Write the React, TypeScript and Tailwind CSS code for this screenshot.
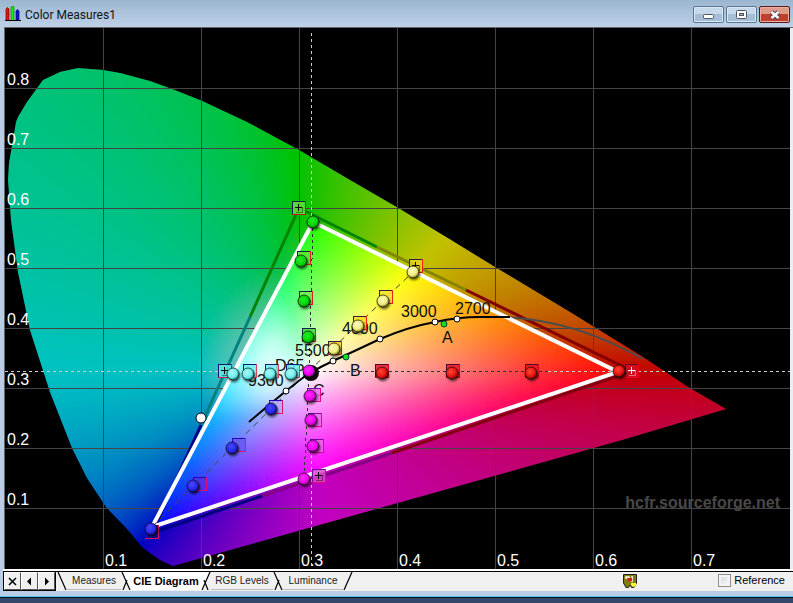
import { useState } from "react";

type Point = [number, number];

const WHITE: Point = [311, 371];

// primaries and secondaries of the reference gamut
const RING: { at: Point; rgb: number[] }[] = [
  { at: [632, 371], rgb: [255, 0, 0] },
  { at: [416, 266], rgb: [255, 255, 0] },
  { at: [299, 208], rgb: [0, 255, 0] },
  { at: [226, 371], rgb: [0, 255, 255] },
  { at: [152, 533], rgb: [0, 0, 255] },
  { at: [319, 476], rgb: [255, 0, 255] },
];

const LOCUS =
  "173,566 160,560 143,548 128,530 106,507 87,478 72,448 50,392 30,330 18,272 11,220 8,180 9,163 13,140 16,122 18,117 27,102 43,80 60,72 78,68 103,70 120,73 150,81 172,89 200,100 247,122 299,150 350,180 400,209 451,240 495,267 570,312 643,357 688,387 726,409 622,440";
const MEASURED = "313,222 618,372 152,527";

function colorAt(x: number, y: number) {
  const dx = x - WHITE[0];
  const dy = y - WHITE[1];
  const dist = Math.hypot(dx, dy) || 1;
  for (let i = 0; i < RING.length; i++) {
    const a = RING[i];
    const b = RING[(i + 1) % RING.length];
    const ax = a.at[0] - WHITE[0];
    const ay = a.at[1] - WHITE[1];
    const bx = b.at[0] - WHITE[0];
    const by = b.at[1] - WHITE[1];
    const det = ax * by - bx * ay;
    const u = (dx * by - bx * dy) / det;
    const v = (ax * dy - dx * ay) / det;
    if (u < -0.0001 || v < -0.0001) continue;
    const s = u + v;
    const t = s ? v / s : 0;
    let pale = Math.pow(Math.max(0, 1 - s), 1.25);
    const facing = Math.max(0, -dx / dist);
    const glow = Math.min(1, Math.max(0, (112 - dist) / 65)) * Math.sqrt(facing);
    pale = Math.max(pale, glow * 0.85);
    const rgb = a.rgb.map((c, k) => {
      const d = b.rgb[k];
      const pure = c === d ? c : 255 * (c > d ? 1 - t : t);
      return Math.round(pure + (255 - pure) * pale);
    });
    return `rgb(${rgb.join(",")})`;
  }
  return "#fff";
}

const STEP = 5;
const CELLS: { x: number; y: number; fill: string }[] = [];
for (let y = 60; y < 575; y += STEP) {
  for (let x = 0; x < 735; x += STEP) {
    if (y < x * 0.585 - 40 || y > 640 - x * 0.28) continue;
    CELLS.push({ x, y, fill: colorAt(x + STEP / 2, y + STEP / 2) });
  }
}

const GAMUT_EDGES = [
  { d: "M299 208L250 317", color: "#008400" },
  { d: "M250 317L201 425", color: "#008080" },
  { d: "M201 425L152 533", color: "#000084" },
  { d: "M299 208L377 247", color: "#008400" },
  { d: "M377 247L466 290", color: "#848400" },
  { d: "M466 290L632 371", color: "#840000" },
  { d: "M632 371L392 453", color: "#840010" },
  { d: "M392 453L262 496", color: "#840084" },
  { d: "M262 496L152 533", color: "#000084" },
];

const TARGETS: { x: number; y: number; fill: string; rim: string; edge: string; cross?: string }[] = [
  { x: 299, y: 208, fill: "#62e038", rim: "#102048", edge: "#c01818", cross: "#000" },
  { x: 304, y: 258, fill: "#58e838", rim: "#102048", edge: "#e02020" },
  { x: 306, y: 298, fill: "#70f050", rim: "#102048", edge: "#e02020" },
  { x: 309, y: 335, fill: "#40d838", rim: "#102048", edge: "#e02020" },
  { x: 416, y: 266, fill: "#e8d020", rim: "#302040", edge: "#f02010", cross: "#000" },
  { x: 386, y: 297, fill: "#f8e030", rim: "#302040", edge: "#f02010" },
  { x: 360, y: 323, fill: "#f8d820", rim: "#302040", edge: "#f02010" },
  { x: 335, y: 348, fill: "#f8c820", rim: "#302040", edge: "#f02010" },
  { x: 225, y: 371, fill: "#60e8e8", rim: "#101878", edge: "#c02050", cross: "#000" },
  { x: 250, y: 371, fill: "#70f0f0", rim: "#101878", edge: "#e04060" },
  { x: 272, y: 371, fill: "#70f0f0", rim: "#101878", edge: "#e04060" },
  { x: 293, y: 371, fill: "#70f0f0", rim: "#101878", edge: "#e04060" },
  { x: 382, y: 371, fill: "#e81830", rim: "#500828", edge: "#e00020" },
  { x: 453, y: 371, fill: "#f01828", rim: "#500828", edge: "#e00020" },
  { x: 532, y: 371, fill: "#f01020", rim: "#500828", edge: "#e00020" },
  { x: 632, y: 371, fill: "#d01020", rim: "#680828", edge: "#f00020", cross: "#fff" },
  { x: 314, y: 395, fill: "#f070f0", rim: "#7800a8", edge: "#e8008c" },
  { x: 315, y: 420, fill: "#f070f0", rim: "#7800a8", edge: "#e8008c" },
  { x: 317, y: 446, fill: "#f060f0", rim: "#7800a8", edge: "#e8008c" },
  { x: 319, y: 476, fill: "#d848c8", rim: "#7800a8", edge: "#f00080", cross: "#000" },
  { x: 276, y: 407, fill: "#b8a8f8", rim: "#2008b8", edge: "#e0107c" },
  { x: 239, y: 445, fill: "#6858f0", rim: "#2008b8", edge: "#e0107c" },
  { x: 200, y: 484, fill: "#5030e8", rim: "#2008b8", edge: "#e0107c" },
  { x: 152, y: 532, fill: "#1010a8", rim: "#2008a0", edge: "#e0105c" },
];

const READINGS: { hue: string; points: Point[] }[] = [
  { hue: "green", points: [[313, 222], [301, 261], [304, 301], [308, 337]] },
  { hue: "yellow", points: [[413, 272], [383, 301], [358, 326], [334, 349]] },
  { hue: "cyan", points: [[233, 374], [248, 374], [270, 374], [291, 374]] },
  { hue: "red", points: [[382, 373], [452, 373], [531, 373], [619, 371]] },
  { hue: "magenta", points: [[310, 396], [311, 420], [313, 446], [304, 479], [309, 371]] },
  { hue: "blue", points: [[271, 409], [232, 448], [193, 486], [151, 529]] },
];

const BALLS = [
  { hue: "green", light: "#28e828", base: "#04d804", dark: "#008000" },
  { hue: "yellow", light: "#fcfcc8", base: "#f0ec78", dark: "#807820" },
  { hue: "cyan", light: "#a8fcf8", base: "#70ecec", dark: "#188080" },
  { hue: "red", light: "#ff4838", base: "#e81410", dark: "#800000" },
  { hue: "magenta", light: "#ff30ff", base: "#f000f0", dark: "#800080" },
  { hue: "blue", light: "#4848ff", base: "#2828f0", dark: "#101080" },
];

const CURVE_LABELS = [
  { text: "9300", x: 248, y: 386 },
  { text: "D65", x: 275, y: 371 },
  { text: "5500", x: 295, y: 356 },
  { text: "4000", x: 342, y: 334 },
  { text: "3000", x: 401, y: 317 },
  { text: "2700", x: 455, y: 314 },
  { text: "A", x: 442, y: 343 },
  { text: "B", x: 350, y: 376 },
  { text: "C", x: 313, y: 396 },
];

function CieDiagram() {
  return (
    <svg
      viewBox="5 28 785 541"
      className="block h-auto w-full bg-black font-['Liberation_Sans',sans-serif] text-[16px]"
      role="img"
      aria-label="CIE chromaticity diagram"
    >
      <defs>
        <clipPath id="locus">
          <polygon points={LOCUS} />
        </clipPath>
        <clipPath id="measured">
          <polygon points={MEASURED} />
        </clipPath>
        <filter id="soften" x="0" y="0" width="1" height="1">
          <feGaussianBlur stdDeviation="5" />
        </filter>
        <filter id="shadow" x="-0.5" y="-0.5" width="2" height="2">
          <feDropShadow dx="1" dy="2" stdDeviation="1" floodOpacity="0.6" />
        </filter>
        {BALLS.map((b) => (
          <radialGradient key={b.hue} id={b.hue} cx="0.42" cy="0.38" r="0.62">
            <stop offset="0" stopColor={b.light} />
            <stop offset="0.65" stopColor={b.base} />
            <stop offset="1" stopColor={b.dark} />
          </radialGradient>
        ))}
        <g id="spectrum" filter="url(#soften)">
          {CELLS.map((c) => (
            <rect key={`${c.x}-${c.y}`} x={c.x} y={c.y} width={STEP + 1} height={STEP + 1} fill={c.fill} />
          ))}
        </g>
      </defs>

      <g clipPath="url(#locus)">
        <use href="#spectrum" />
        <rect x="0" y="28" width="790" height="541" fill="#000" opacity="0.24" />
      </g>

      <g stroke="#444" strokeWidth="1" shapeRendering="crispEdges">
        {[103, 201, 299, 397, 495, 593, 691].map((x) => (
          <path key={x} d={`M${x + 0.5} 28V569`} />
        ))}
        {[88, 148, 208, 268, 328, 388, 448, 508].map((y) => (
          <path key={y} d={`M5 ${y + 0.5}H790`} />
        ))}
      </g>

      <g clipPath="url(#measured)">
        <use href="#spectrum" />
      </g>

      <g strokeWidth="3" fill="none">
        {GAMUT_EDGES.map((e) => (
          <path key={e.d} d={e.d} stroke={e.color} />
        ))}
      </g>
      <path d="M505 317Q575 320 643 359" fill="none" stroke="#4c4c4c" strokeWidth="2" />
      <polygon points={MEASURED} fill="none" stroke="#fff" strokeWidth="4" />

      <g strokeDasharray="3 3" fill="none" shapeRendering="crispEdges">
        <path d="M5 371.5H218M548 371.5H790M311.5 33V216M311.5 455V569" stroke="#ccc" />
        <path d="M311 371.5H548M313 222L309 371L304 479" stroke="#333" />
      </g>
      <path d="M152 527L309 371L413 272" fill="none" stroke="#444" strokeDasharray="6 5" />

      <g fill="#111">
        {CURVE_LABELS.map((l) => (
          <text key={l.text} x={l.x} y={l.y}>
            {l.text}
          </text>
        ))}
      </g>
      <path
        d="M249 422Q270 404 286 391T310 373Q322 366 333 361T380 339Q408 327 435 322Q458 317 480 317L510 317"
        fill="none"
        stroke="#000"
        strokeWidth="2"
      />
      <g fill="#fff" stroke="#000">
        {[[286, 391], [333, 361], [380, 339], [435, 322], [457, 319]].map(([x, y]) => (
          <circle key={x} cx={x} cy={y} r="3" />
        ))}
        <circle cx="201" cy="418" r="5" />
      </g>
      <g fill="#10e020" stroke="#043">
        <circle cx="346" cy="357" r="3" />
        <circle cx="444" cy="324" r="3" />
      </g>

      {TARGETS.map((t) => (
        <g key={`${t.x}-${t.y}`} fill="none" shapeRendering="crispEdges">
          <rect x={t.x - 6} y={t.y - 6} width="13" height="13" fill={t.fill} fillOpacity="0.85" />
          <path d={`M${t.x - 6.5} ${t.y + 7}V${t.y - 6.5}H${t.x + 7}`} stroke={t.rim} />
          <path d={`M${t.x - 7} ${t.y + 6.5}H${t.x + 6.5}V${t.y - 7}`} stroke={t.edge} />
          {t.cross && (
            <>
              <path
                d={`M${t.x - 3} ${t.y + 4.5}H${t.x + 3.5}V${t.y - 1}`}
                stroke={t.cross}
                strokeOpacity="0.4"
              />
              <path d={`M${t.x - 4} ${t.y - 0.5}H${t.x + 3}M${t.x - 0.5} ${t.y - 4}V${t.y + 3}`} stroke={t.cross} />
            </>
          )}
        </g>
      ))}

      <circle cx="311" cy="373" r="8" fill="#111" />
      {READINGS.map((r) => (
        <g key={r.hue} filter="url(#shadow)" stroke="#111" strokeOpacity="0.7">
          {r.points.map(([x, y]) => (
            <circle key={`${x}-${y}`} cx={x} cy={y} r="6" fill={`url(#${r.hue})`} />
          ))}
        </g>
      ))}

      <g fill="#fff">
        {[1, 2, 3, 4, 5, 6, 7].map((n) => (
          <text key={n} x={n * 98 + 7} y="566">
            0.{n}
          </text>
        ))}
        {[1, 2, 3, 4, 5, 6, 7, 8].map((n) => (
          <text key={n} x="7" y={565 - n * 60}>
            0.{n}
          </text>
        ))}
      </g>
      <text x="780" y="508" textAnchor="end" fill="#484848" className="font-bold">
        hcfr.sourceforge.net
      </text>
    </svg>
  );
}

function TitleBar() {
  const button =
    "flex h-[17px] w-[31px] items-center justify-center rounded-xs border border-[#5b7590] bg-linear-to-b from-[#c6d8ea] from-50% to-[#a4bed8] to-50% shadow-[inset_0_0_0_1px_#dbe8f5]";
  return (
    <header className="flex h-[27px] items-center bg-linear-to-b from-[#9cb6d0] to-[#bdd1e8] pr-[3px] pl-[5px]">
      <svg viewBox="0 0 16 16" className="mr-1 size-4">
        <path d="M1 14V3Q2.500 0 4 3V14" fill="#e81010" stroke="#700" strokeWidth="0.7" />
        <path d="M6 14V1Q8 -1 9 1V14" fill="#18f018" stroke="#070" strokeWidth="0.7" />
        <path d="M11 14V5Q12.500 2 14 5V14" fill="#1010d8" stroke="#006" strokeWidth="0.7" />
        <path d="M0 14.500H16" stroke="#000" />
      </svg>
      <h1 className="pt-[2px] text-[12px] text-[#111]">Color Measures1</h1>
      <div className="ml-auto flex gap-[2px] pt-[2px]">
        <button className={button} aria-label="Minimize">
          <svg viewBox="0 0 13 9" className="h-[9px] w-[13px]">
            <rect x="1.500" y="4.500" width="10" height="4" rx="1" fill="#fff" stroke="#4c5560" />
          </svg>
        </button>
        <button className={button} aria-label="Maximize">
          <svg viewBox="0 0 11 9" className="h-[9px] w-[11px]">
            <rect x="0.500" y="0.500" width="10" height="8" rx="1" fill="#fff" stroke="#4c5560" />
            <rect x="3.500" y="3.500" width="4" height="2" fill="#9ab4cf" stroke="#4c5560" />
          </svg>
        </button>
        <button
          className="flex h-[17px] w-[31px] items-center justify-center rounded-xs border border-[#5a1a1a] bg-linear-to-b from-[#e09a8c] from-50% to-[#c04030] to-50% shadow-[inset_0_0_0_1px_#eab0a4]"
          aria-label="Close"
        >
          <svg viewBox="0 0 12 10" className="h-[10px] w-[12px]">
            <path d="M2.500 2L9.500 8M9.500 2L2.500 8" stroke="#4c4550" strokeWidth="4.500" />
            <path d="M2.500 2L9.500 8M9.500 2L2.500 8" stroke="#fff" strokeWidth="2.500" />
          </svg>
        </button>
      </div>
    </header>
  );
}

function Slant({ fill, line }: { fill: string; line: string }) {
  return (
    <svg viewBox="0 0 10 18" className="h-[18px] w-[10px] shrink-0">
      <path d={fill} fill="#fff" />
      <path d={line} fill="none" stroke="#000" strokeWidth="1.200" />
    </svg>
  );
}

function BottomBar() {
  const [tab, setTab] = useState("CIE Diagram");
  const [reference, setReference] = useState(false);
  const nav =
    "flex h-[18px] w-[17px] items-center justify-center border border-t-white border-r-[#555] border-b-[#555] border-l-white bg-[#f0f0f0]";
  const tabs = [
    {
      name: "Measures",
      width: "w-[54px]",
      fill: "",
      line: "M1 0L9 18",
    },
    {
      name: "CIE Diagram",
      width: "w-[70px]",
      fill: "M1 0L9 18H10V0Z",
      line: "M1 0L9 18M6 8L2 18",
    },
    {
      name: "RGB Levels",
      width: "w-[62px]",
      fill: "M0 0H9L1 18H0Z",
      line: "M9 0L1 18M3 8L7 18",
    },
    {
      name: "Luminance",
      width: "w-[60px]",
      fill: "",
      line: "M1 0L9 18M6 8L2 18",
    },
  ];
  return (
    <footer className="flex h-[22px] items-start border-t-2 border-white bg-[#f0f0f0]">
      <div className="flex h-[20px] w-full items-start border-t border-black">
        <div className="flex border-r border-b border-l border-black">
          <button className={nav} aria-label="Close tab">
            <svg viewBox="0 0 9 9" className="size-[9px]">
              <path d="M1 1L8 8M8 1L1 8" stroke="#000" strokeWidth="1.500" />
            </svg>
          </button>
          <button className={nav} aria-label="Previous tab">
            <svg viewBox="0 0 9 9" className="size-[9px]">
              <path d="M2 4.500L6 0.500V8.500Z" />
            </svg>
          </button>
          <button className={nav} aria-label="Next tab">
            <svg viewBox="0 0 9 9" className="size-[9px]">
              <path d="M7 4.500L3 0.500V8.500Z" />
            </svg>
          </button>
        </div>
        <nav className="ml-px flex" role="tablist">
          {tabs.map((t) => (
            <div key={t.name} className="flex">
              <Slant fill={t.fill} line={t.line} />
              <button
                role="tab"
                aria-selected={tab === t.name}
                onClick={() => setTab(t.name)}
                className={`${t.width} flex h-[18px] items-center justify-center whitespace-nowrap ${
                  tab === t.name
                    ? "bg-white text-[11px] font-bold text-black"
                    : "border-b border-[#bbb] text-[10px] text-[#222]"
                }`}
              >
                {t.name}
              </button>
            </div>
          ))}
          <Slant fill="" line="M9 0L1 18" />
        </nav>
        <div className="ml-auto flex items-center">
          <svg viewBox="0 0 14 14" className="mt-px size-[14px]">
            <path d="M0.500 0.500H13.500V9L11 13.500H8.500L7 11L5.500 13.500H3L0.500 9Z" fill="#7c7c10" stroke="#222" />
            <path d="M3 5V3H6V5L9 7V3H10" fill="none" stroke="#fff" strokeWidth="1.500" />
            <path d="M5 4H9V7H5Z" fill="#d81818" />
            <path d="M8 9H13V11L11 13H10L8 11Z" fill="#ffff20" />
          </svg>
          <label className="ml-[81px] flex items-center gap-[3px] pr-[8px] text-[11px] text-black">
            <input
              type="checkbox"
              checked={reference}
              onChange={(e) => setReference(e.target.checked)}
              className="mt-px size-[13px] appearance-none border border-[#8e8f8f] bg-linear-to-br from-[#cfd3d8] to-white shadow-[inset_0_0_0_2px_#f4f4f4] checked:bg-[#3a6ea5]"
            />
            Reference
          </label>
        </div>
      </div>
    </footer>
  );
}

export default function App() {
  return (
    <div className="min-h-screen bg-[#33476b] font-['Liberation_Sans',sans-serif]">
      <div className="border-b border-[#0a1420] bg-[#b9cee6] pb-[6px] shadow-[inset_0_-1px_0_#50c8e8]">
        <div className="font-['Roboto',sans-serif]">
          <TitleBar />
        </div>
        <main className="ml-1 border-t border-l border-[#666]">
          <div className="border-r-3 border-[#e8eef4]">
            <CieDiagram />
          </div>
        </main>
        <div className="ml-[3px]">
          <BottomBar />
        </div>
      </div>
    </div>
  );
}
